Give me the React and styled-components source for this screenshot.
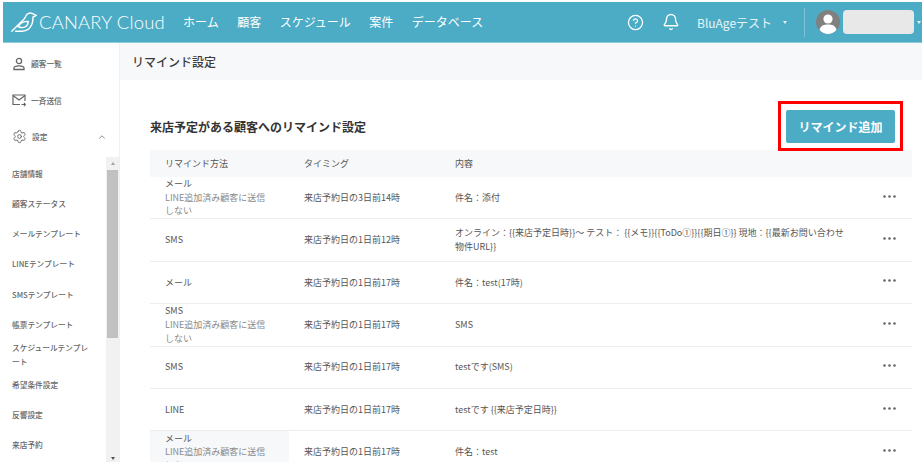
import React from "react"
import styled, { createGlobalStyle } from "styled-components"
import { CircleHelp, Bell, Settings, ChevronUp } from "lucide-react"

const rows = [
  { method: "メール", note: true, timing: "来店予約日の3日前14時", body: "件名：添付" },
  { method: "SMS", timing: "来店予約日の1日前12時", body: "オンライン：{{来店予定日時}}〜 テスト： {{メモ}}{{ToDo①}}{{期日①}} 現地：{{最新お問い合わせ物件URL}}" },
  { method: "メール", timing: "来店予約日の1日前17時", body: "件名：test(17時)" },
  { method: "SMS", note: true, timing: "来店予約日の1日前17時", body: "SMS" },
  { method: "SMS", timing: "来店予約日の1日前17時", body: "testです(SMS)" },
  { method: "LINE", timing: "来店予約日の1日前17時", body: "testです {{来店予定日時}}" },
  { method: "メール", note: true, hover: true, timing: "来店予約日の1日前17時", body: "件名：test" },
]

const subMenu = [
  "店舗情報",
  "顧客ステータス",
  "メールテンプレート",
  "LINEテンプレート",
  "SMSテンプレート",
  "帳票テンプレート",
  "スケジュールテンプレート",
  "希望条件設定",
  "反響設定",
  "来店予約",
]

const BirdLogo = () => (
  <svg width="26" height="20" viewBox="0 0 26 20" fill="none" stroke="#fff" strokeWidth="1.4" strokeLinecap="round" strokeLinejoin="round">
    <path d="M0.8 19.3 L10 10 C12 8 13.8 7 14.8 4.2 C15.8 1.5 18.8 0.4 21 1.4 L25.3 3.4 L22 5 C22.4 13 18 19.2 11 19.2 L4.6 19.2" />
    <path d="M7 14.5 C9.5 10.8 13.5 9.2 17.2 9.4 C17.4 14 13 17.4 7 14.5 Z" />
  </svg>
)

const UserIcon = () => (
  <svg width="14" height="14" viewBox="0 0 14 14" fill="none" stroke="#666" strokeWidth="1.3">
    <circle cx="7" cy="4" r="2.6" />
    <path d="M2 12.5 V11 C2 9.5 4 8.8 7 8.8 C10 8.8 12 9.5 12 11 V12.5 Z" />
  </svg>
)

const MailSendIcon = () => (
  <svg width="14" height="14" viewBox="0 0 14 14" fill="none" stroke="#666" strokeWidth="1.2">
    <path d="M8 11.5 H1 V2 H13 V8" />
    <path d="M1 2.5 L7 7 L13 2.5" />
    <path d="M9.5 11.5 H13.5 M12 10 L13.5 11.5 L12 13" />
  </svg>
)

const Avatar = () => (
  <svg width="24" height="24" viewBox="0 0 24 24">
    <circle cx="12" cy="12" r="12" fill="#808080" />
    <circle cx="12" cy="9" r="4.6" fill="#fff" />
    <path d="M3.5 20 C4.5 15.5 8 14.6 12 14.6 C16 14.6 19.5 15.5 20.5 20 C18 22.6 15 24 12 24 C9 24 6 22.6 3.5 20 Z" fill="#fff" />
  </svg>
)

const Dots = () => (
  <svg width="13" height="3" viewBox="0 0 13 3" fill="#666">
    <circle cx="1.5" cy="1.5" r="1.3" />
    <circle cx="6.5" cy="1.5" r="1.3" />
    <circle cx="11.5" cy="1.5" r="1.3" />
  </svg>
)

const App = () => (
  <>
    <GlobalStyle />
    <Page>
      <Header>
        <Logo>
          <BirdLogo />
          <LogoText>CANARY Cloud</LogoText>
        </Logo>
        <Nav>
          <NavLink>ホーム</NavLink>
          <NavLink>顧客</NavLink>
          <NavLink>スケジュール</NavLink>
          <NavLink>案件</NavLink>
          <NavLink>データベース</NavLink>
        </Nav>
        <HeaderRight>
          <CircleHelp size={17} strokeWidth={1.8} />
          <BellSlot>
            <Bell size={18} strokeWidth={1.8} />
          </BellSlot>
          <Account>
            BluAgeテスト
            <Caret />
          </Account>
          <Divider />
          <Avatar />
          <NameMask />
          <Caret />
        </HeaderRight>
      </Header>

      <Body>
        <Sidebar>
          <TopItem>
            <UserIcon />
            <TopLabel>顧客一覧</TopLabel>
          </TopItem>
          <TopItem>
            <MailSendIcon />
            <TopLabel>一斉送信</TopLabel>
          </TopItem>
          <TopItem>
            <Settings size={15} strokeWidth={1.5} color="#666" />
            <TopLabel>設定</TopLabel>
            <ChevronSlot>
              <ChevronUp size={10} strokeWidth={1.8} color="#666" />
            </ChevronSlot>
          </TopItem>
          <SubArea>
            <SubList>
              {subMenu.map(item => (
                <SubItem key={item}>{item}</SubItem>
              ))}
            </SubList>
            <ScrollTrack>
              <ScrollArrow />
              <ScrollThumb />
              <ScrollRest />
              <ScrollArrow $down />
            </ScrollTrack>
          </SubArea>
        </Sidebar>

        <Main>
          <TitleBar>リマインド設定</TitleBar>
          <Content>
            <HeadingRow>
              <Heading>来店予定がある顧客へのリマインド設定</Heading>
              <AddButton>リマインド追加</AddButton>
            </HeadingRow>
            <HeadRow>
              <HeadCell>リマインド方法</HeadCell>
              <HeadCell>タイミング</HeadCell>
              <HeadCell>内容</HeadCell>
            </HeadRow>
            {rows.map((row, i) => (
              <Row key={i}>
                <MethodCell $hover={row.hover}>
                  {row.method}
                  {row.note && <Note>LINE追加済み顧客に送信しない</Note>}
                </MethodCell>
                <Cell>{row.timing}</Cell>
                <BodyCell>{row.body}</BodyCell>
                <MenuCell>
                  <Dots />
                </MenuCell>
              </Row>
            ))}
          </Content>
        </Main>
      </Body>
    </Page>
  </>
)
export default App

//Styled

const GlobalStyle = createGlobalStyle`
  html, body {
    margin: 0;
    background: #fff;
  }
  * {
    box-sizing: border-box;
  }
  body {
    font-family: "Noto Sans CJK JP", "Noto Sans", sans-serif;
    color: #555;
  }
`

const Page = styled.div`
  width: 922px;
  height: 462px;
  padding: 2px 0 0 3px;
  display: flex;
  flex-direction: column;
  overflow: hidden;
`

const Header = styled.header`
  height: 41px;
  flex: none;
  display: flex;
  align-items: center;
  padding: 0 0 0 8px;
  background: #4cacc6;
  color: #fff;
  border-bottom: 1px solid #8fcbdb;
`

const Logo = styled.div`
  display: flex;
  align-items: center;
  gap: 2px;
  width: 172px;
  flex: none;
`

const LogoText = styled.span`
  font-family: Lato, sans-serif;
  font-size: 18.4px;
  font-weight: 300;
  letter-spacing: 0.2px;
  white-space: nowrap;
`

const Nav = styled.nav`
  display: flex;
  gap: 18.5px;
`

const NavLink = styled.a`
  font-size: 12px;
  line-height: 16px;
  white-space: nowrap;
`

const HeaderRight = styled.div`
  margin-left: auto;
  display: flex;
  align-items: center;
  width: 295px;
  flex: none;
`

const BellSlot = styled.span`
  display: flex;
  margin: 0 0 0 18px;
`

const Account = styled.div`
  display: flex;
  align-items: center;
  gap: 11px;
  margin-left: 17px;
  font-size: 12px;
  white-space: nowrap;
  color: #e6f4f8;
`

const Caret = styled.span`
  display: inline-block;
  width: 0;
  height: 0;
  border-left: 2.5px solid transparent;
  border-right: 2.5px solid transparent;
  border-top: 3px solid #e6f4f8;
`

const Divider = styled.span`
  width: 1px;
  height: 29px;
  margin: 0 11px 0 17px;
  background: #7fc3d6;
`

const NameMask = styled.span`
  width: 71px;
  height: 24px;
  margin: 0 3px 0 3px;
  border-radius: 4px;
  background: #e8e8e8;
`

const Body = styled.div`
  flex: 1;
  min-height: 0;
  display: flex;
`

const Sidebar = styled.aside`
  width: 117px;
  flex: none;
  display: flex;
  flex-direction: column;
  padding-top: 2.5px;
  border-right: 1px solid #eef0f3;
`

const TopItem = styled.div`
  height: 36.5px;
  flex: none;
  display: flex;
  align-items: center;
  gap: 5px;
  padding: 0 12px 0 9px;
`

const TopLabel = styled.span`
  font-size: 7.7px;
  font-weight: 500;
  color: #666;
`

const ChevronSlot = styled.span`
  display: flex;
  margin-left: auto;
`

const SubArea = styled.div`
  flex: 1;
  min-height: 0;
  display: flex;
  margin-top: 1.5px;
`

const SubList = styled.ul`
  flex: 1;
  min-width: 0;
  margin: 0;
  padding: 2px 14px 0 9px;
  list-style: none;
`

const SubItem = styled.li`
  height: 30.2px;
  display: flex;
  align-items: center;
  font-size: 7.7px;
  font-weight: 500;
  line-height: 13.6px;
  color: #666;
`

const ScrollTrack = styled.div`
  width: 13px;
  flex: none;
  display: flex;
  flex-direction: column;
  background: #f1f1f1;
`

const ScrollArrow = styled.span`
  flex: none;
  align-self: center;
  margin-top: 5px;
  width: 0;
  height: 3px;
  border-left: 2.5px solid transparent;
  border-right: 2.5px solid transparent;
  ${props =>
    props.$down
      ? "border-top: 3px solid #505050; margin-bottom: 2px;"
      : "border-bottom: 3px solid #a3a3a3; margin-bottom: 5px;"}
`

const ScrollThumb = styled.span`
  height: 168px;
  flex: none;
  margin: 0 1px;
  background: #c1c1c1;
`

const ScrollRest = styled.span`
  flex: 1;
`

const Main = styled.main`
  flex: 1;
  min-width: 0;
  display: flex;
  flex-direction: column;
`

const TitleBar = styled.div`
  height: 37px;
  flex: none;
  display: flex;
  align-items: center;
  padding-left: 12px;
  background: #f7f8fa;
  font-size: 12px;
  font-weight: 500;
  color: #3c3c3c;
`

const Content = styled.section`
  flex: 1;
  min-height: 0;
  padding: 30px 10px 0 30px;
  overflow: hidden;
`

const HeadingRow = styled.div`
  height: 40px;
  display: flex;
  align-items: flex-start;
  justify-content: space-between;
  padding-right: 17px;
`

const Heading = styled.h2`
  margin: 0;
  padding-top: 8px;
  font-size: 12px;
  line-height: 17px;
  font-weight: 700;
  color: #333;
`

const AddButton = styled.button`
  position: relative;
  width: 109px;
  height: 33px;
  border: 0;
  border-radius: 2px;
  background: #4cacc6;
  color: #fff;
  font-family: inherit;
  font-size: 12px;
  font-weight: 700;
  padding: 0;

  &::after {
    content: "";
    position: absolute;
    inset: -9px -8px -8px -8px;
    border: 3px solid #f00;
    pointer-events: none;
  }
`

const rowColumns = `
  display: grid;
  grid-template-columns: 139px 151px 1fr 50px;
  font-size: 9px;
`

const HeadRow = styled.div`
  ${rowColumns}
  height: 27px;
  align-items: center;
  background: #f7f8fa;
  color: #555;
`

const HeadCell = styled.div`
  padding-left: 15px;
`

const Row = styled.div`
  ${rowColumns}
  height: 42.4px;
  align-items: center;
  border-bottom: 1.5px solid #eceef1;
  color: #555;
`

const Cell = styled.div`
  padding: 0 0 0 15px;
  line-height: 13.6px;
`

const BodyCell = styled(Cell)`
  padding-right: 12px;
`

const MethodCell = styled(Cell)`
  align-self: stretch;
  display: flex;
  flex-direction: column;
  justify-content: center;
  padding-right: 20px;
  background: ${props => (props.$hover ? "#f7f8fa" : "transparent")};
`

const Note = styled.div`
  color: #8a8a8a;
`

const MenuCell = styled.div`
  display: flex;
  justify-content: flex-end;
  padding: 0 16px 3px 0;
`
